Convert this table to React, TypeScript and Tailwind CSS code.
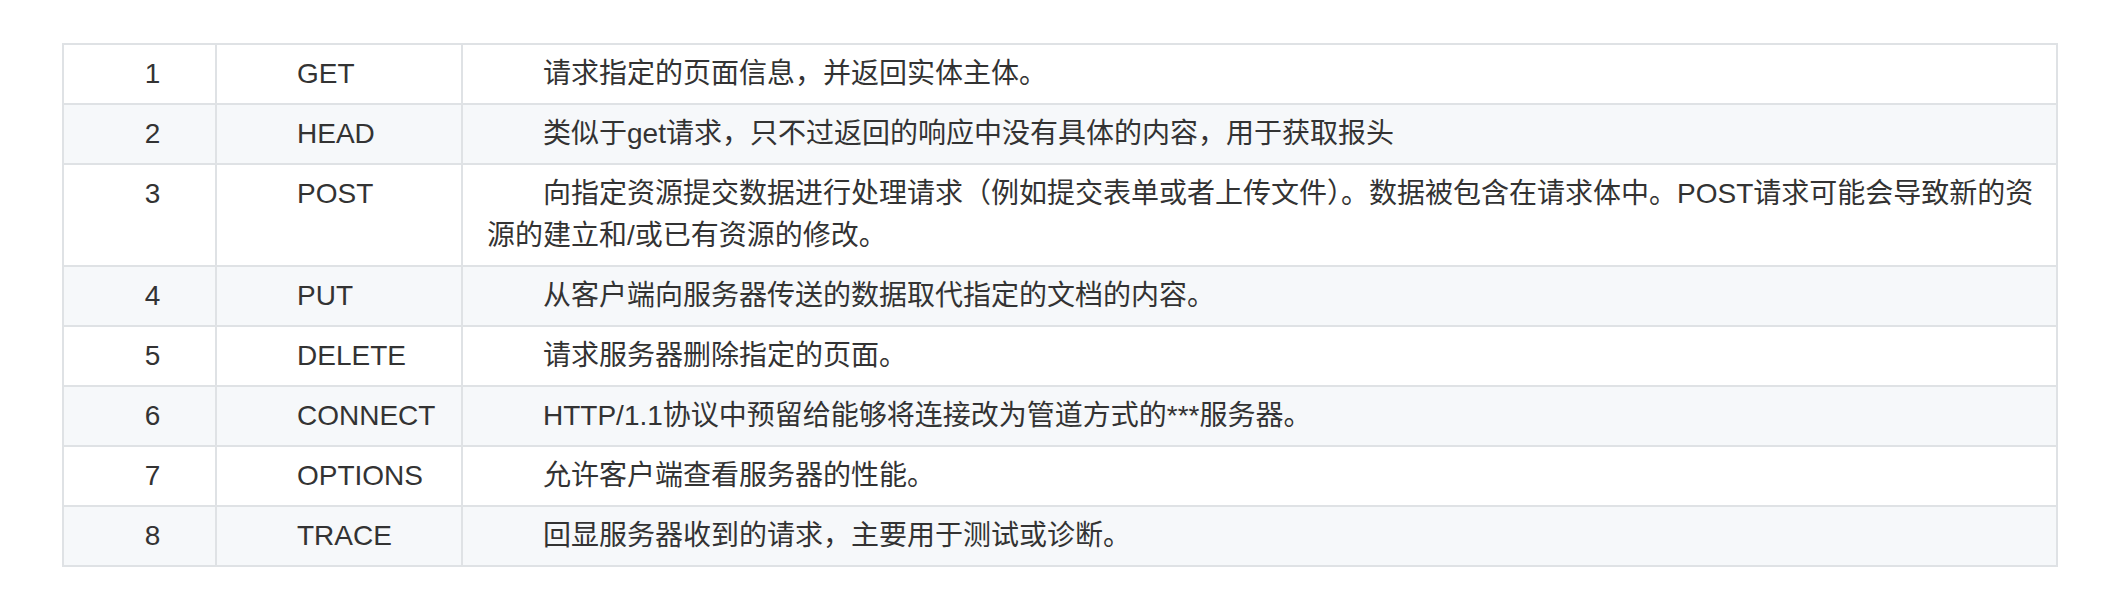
const methods = [
  { id: 1, name: 'GET', desc: '请求指定的页面信息，并返回实体主体。' },
  { id: 2, name: 'HEAD', desc: '类似于get请求，只不过返回的响应中没有具体的内容，用于获取报头' },
  {
    id: 3,
    name: 'POST',
    desc: '向指定资源提交数据进行处理请求（例如提交表单或者上传文件）。数据被包含在请求体中。POST请求可能会导致新的资源的建立和/或已有资源的修改。',
  },
  { id: 4, name: 'PUT', desc: '从客户端向服务器传送的数据取代指定的文档的内容。' },
  { id: 5, name: 'DELETE', desc: '请求服务器删除指定的页面。' },
  { id: 6, name: 'CONNECT', desc: 'HTTP/1.1协议中预留给能够将连接改为管道方式的***服务器。' },
  { id: 7, name: 'OPTIONS', desc: '允许客户端查看服务器的性能。' },
  { id: 8, name: 'TRACE', desc: '回显服务器收到的请求，主要用于测试或诊断。' },
];

export default function App() {
  return (
    <div className="bg-white px-[62px] pt-[43px] pb-[39px] font-['Liberation_Sans','Noto_Sans_CJK_SC',sans-serif] text-[28px] leading-[42px] text-[#333]">
      <table className="w-full table-fixed border-collapse">
        <colgroup>
          <col className="w-[153px]" />
          <col className="w-[246px]" />
          <col />
        </colgroup>
        <tbody>
          {methods.map((m, i) => (
            <tr key={m.id} className={i % 2 === 1 ? 'bg-[#f6f8fa]' : 'bg-white'}>
              <td className="border-2 border-[#dfe2e5] py-2 pl-[50px] pr-[24px] text-center align-top">{m.id}</td>
              <td className="border-2 border-[#dfe2e5] py-2 pl-[24px] pr-[24px] indent-14 align-top">{m.name}</td>
              <td className="border-2 border-[#dfe2e5] py-2 pl-[24px] pr-[20px] indent-14 align-top">{m.desc}</td>
            </tr>
          ))}
        </tbody>
      </table>
    </div>
  );
}
